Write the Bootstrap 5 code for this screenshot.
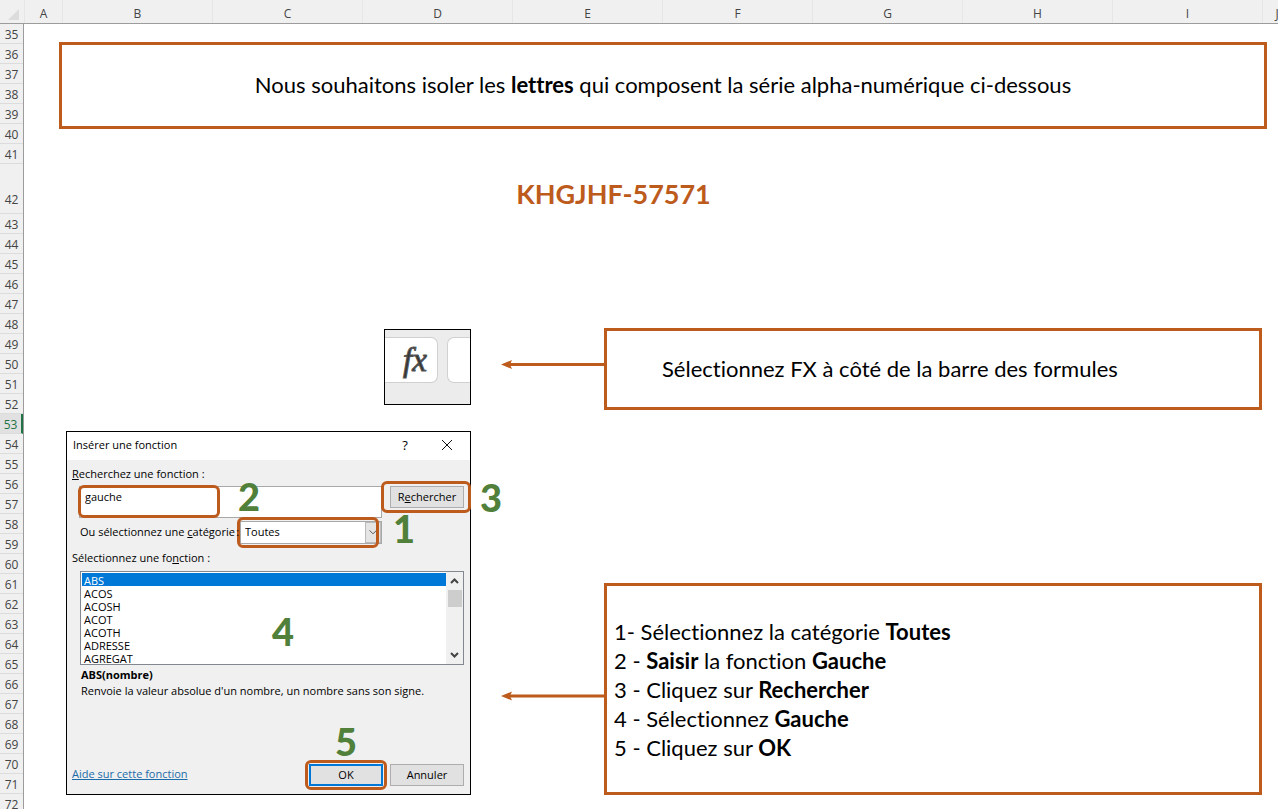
<!DOCTYPE html>
<html lang="fr">
<head>
<meta charset="utf-8">
<meta name="viewport" content="width=device-width, initial-scale=1">
<title>Fonction GAUCHE</title>
<link href="https://cdn.jsdelivr.net/npm/bootstrap@5.3.0/dist/css/bootstrap.min.css" rel="stylesheet">
<style>
  :root { --rust: #bd5b1d; --leaf: #51803a; --chrome: #f0f0f0; }
  body { font-family: "Open Sans", "Noto Sans", sans-serif; color: #000; background: #fff; font-variant-ligatures: none; }

  /* Spreadsheet frame */
  .sheet { height: 100vh; }
  .col-heads { display: grid; grid-template-columns: 24px 38px repeat(8, minmax(0, 1fr)) 16px; height: 24px;
    background: var(--chrome); border-bottom: 1px solid #9c9c9c; font-size: 12px; line-height: 28px; color: #444; text-align: center; }
  .col-heads > span { height: 23px; }
  .col-heads > span + span { border-left: 1px solid #e6e6e6; }
  .col-heads .cut { width: 28px; }
  .corner { fill: #dcdcdc; display: block; }
  .row-heads { width: 24px; flex: none; background: var(--chrome); border-right: 1px solid #9c9c9c;
    font-size: 12px; line-height: 22px; color: #444; text-align: center; }
  .row-heads li { height: 20px; border-bottom: 1px solid #dcdcdc; }
  .row-heads .tall { height: 50px; padding-top: 25px; }
  .row-heads .current { background: #e1e1e1; color: #217346; border-right: 2px solid #217346; }

  /* Notes */
  .cells { font-family: Lato, "Noto Sans", sans-serif; font-size: 22px; }
  .note { border: 3px solid var(--rust); background: #fff; }
  .banner { margin: 18px 11px 0 35px; height: 87px; padding-bottom: 2px; }
  .code { margin: 41px 110px 0 35px; font-size: 27px; line-height: 48px; font-weight: 700; color: var(--rust); text-align: center; }
  .step { padding: 0 16px 0 42px; gap: 30px; }
  .step-fx { margin-top: 110px; }
  .step-dialog { margin-top: 21px; }
  .shot { width: 405px; flex: none; }
  .arrow { width: 103px; flex: none; }
  .arrow svg { display: block; width: 103px; height: 12px; }
  .note-fx { height: 82px; padding: 0 0 2px 55px; }
  .note-steps { height: 212px; padding: 0 7px; line-height: 29px; }

  /* Formula bar extract */
  .fx-bar { width: 87px; height: 76px; border: 1px solid #000; background: #ececec; padding-top: 7px; gap: 9px; }
  .fx-bar button, .fx-bar span { height: 46px; border: 1px solid #d0d0d0; background: #fff; }
  .fx-bar button { width: 53px; border-left: 0; border-radius: 0 7px 7px 0; padding: 0 0 0 8px;
    font: italic 33px/38px "Liberation Serif", serif; color: #333; -webkit-text-stroke: 1px #555; }
  .fx-bar span { flex: 1; border-right: 0; border-radius: 7px 0 0 7px; }

  /* Insert function dialog */
  .dlg { height: 364px; border: 1px solid #000; background: var(--chrome); font: 11px/16px "Open Sans", "Noto Sans", sans-serif; }
  .dlg-title { height: 28px; background: #fff; padding: 0 16px 2px 6px; }
  .dlg-title button { border: 0; background: none; padding: 0; width: 14px; line-height: 16px; font-size: 13px; }
  .dlg-title svg { display: block; }
  .dlg-body { padding: 6px 6px 8px 5px; height: 334px; }
  .dlg input, .dlg select { font: inherit; color: #000; border: 1px solid #a8a8a8; border-radius: 0; background: #fff; }
  .dlg-search { margin: 4px 0 0 7px; }
  .search-box { width: 303px; }
  .search-box input { display: block; width: 303px; height: 32px; padding: 0 5px 12px; }
  .dlg-btn { width: 74px; height: 22px; border: 1px solid #adadad; background: #e1e1e1; padding: 0 0 1px; font: inherit; line-height: 18px; }
  .dlg-btn.primary { border: 2px solid #0078d7; }
  .cat-row { margin: 3px 0 0 8px; height: 23px; }
  .cat-row label { width: 160px; flex: none; white-space: nowrap; padding-bottom: 2px; position: relative; z-index: 1; }
  .cat-box { width: 142px; }
  .cat-box select { display: block; width: 142px; height: 23px; padding: 0 4px 2px; appearance: none; }
  .cat-box .chev { position: absolute; right: 1px; top: 1px; width: 16px; height: 21px; background: #e5e5e5; border: 1px solid #bbb; }
  .fn-label { margin-top: 6px; }
  .fn-list { margin: 5px 0 0 8px; width: 384px; height: 94px; border: 1px solid #828790; background: #fff; }
  .fn-list select { flex: 1; height: 92px; border: 0; padding: 1px 0 0 1px; overflow: hidden; outline: 0; }
  .fn-list option { padding: 0 2px; height: 13px; min-height: 0; line-height: 12px; font-size: 11px; }
  .fn-list option:checked { background: #0078d7 linear-gradient(#0078d7, #0078d7); color: #fff; -webkit-text-fill-color: #fff; }
  .bar { width: 17px; background: var(--chrome); }
  .bar i { height: 17px; width: 14px; margin: 0 auto; background: #cdcdcd; }
  .fn-help { margin: 2px 0 0 9px; }
  .dlg a { color: #1b6ca8; }
  .help-link { padding-bottom: 3px; }
  .ok-wrap { margin-right: 7px; }

  /* Callouts laid over the dialog */
  .ring { position: absolute; border: 3px solid var(--rust); border-radius: 6px; pointer-events: none; }
  .ring-2 { left: -1px; top: -1px; width: 142px; height: 33px; }
  .ring-3 { inset: -5px -7px -5px -9px; }
  .ring-1 { inset: -4px 3px -4px -3px; }
  .ring-5 { inset: -4px; }
  .num { position: absolute; font: 900 38px/38px Lato, "Noto Sans", sans-serif; color: var(--leaf); pointer-events: none; }
  .num-1 { left: 153px; top: -12px; }
  .num-2 { left: 159px; top: -9px; }
  .num-3 { left: 90px; top: -8px; }
  .num-4 { left: 191px; top: 40px; }
  .num-5 { left: 26px; top: -42px; }
</style>
</head>
<body>
<div class="sheet overflow-hidden d-flex flex-column">
  <div class="col-heads flex-shrink-0">
    <span><svg class="corner" width="22" height="22"><path d="M19 9v11H8z"/></svg></span>
    <span>A</span><span>B</span><span>C</span><span>D</span><span>E</span><span>F</span><span>G</span><span>H</span><span>I</span>
    <span class="overflow-hidden"><span class="cut d-block">J</span></span>
  </div>
  <div class="d-flex flex-grow-1">
    <ol class="row-heads list-unstyled mb-0">
      <li>35</li><li>36</li><li>37</li><li>38</li><li>39</li><li>40</li><li>41</li><li class="tall">42</li><li>43</li><li>44</li>
      <li>45</li><li>46</li><li>47</li><li>48</li><li>49</li><li>50</li><li>51</li><li>52</li><li class="current">53</li><li>54</li>
      <li>55</li><li>56</li><li>57</li><li>58</li><li>59</li><li>60</li><li>61</li><li>62</li><li>63</li><li>64</li>
      <li>65</li><li>66</li><li>67</li><li>68</li><li>69</li><li>70</li><li>71</li><li>72</li>
    </ol>

    <main class="cells flex-grow-1">
      <div class="note banner d-flex align-items-center justify-content-center">
        <div>Nous souhaitons isoler les <b>lettres</b> qui composent la série alpha-numérique ci-dessous</div>
      </div>
      <div class="code">KHGJHF-57571</div>

      <section class="step step-fx d-flex align-items-center">
        <div class="shot d-flex justify-content-end pb-1">
          <div class="fx-bar d-flex align-items-start"><button type="button" aria-label="Insérer une fonction">fx</button><span></span></div>
        </div>
        <div class="d-flex flex-grow-1 align-items-center">
          <div class="arrow pb-2"><svg viewBox="0 0 103 12"><path d="M7 5.500H103" stroke="#bd5b1d" stroke-width="3"/><path d="M0 5.500L11 1L9 5.500L11 10z" fill="#bd5b1d"/></svg></div>
          <div class="note note-fx flex-grow-1 d-flex align-items-center">Sélectionnez FX à côté de la barre des formules</div>
        </div>
      </section>

      <section class="step step-dialog d-flex align-items-end">
        <div class="shot dlg">
          <div class="dlg-title d-flex align-items-center">
            <span class="me-auto">Insérer une fonction</span>
            <button type="button" class="me-4">?</button>
            <button type="button" class="ms-1" aria-label="Fermer"><svg width="14" height="12" viewBox="0 0 14 12"><path d="M2 1l10 10M12 1L2 11" stroke="#111" fill="none"/></svg></button>
          </div>
          <div class="dlg-body d-flex flex-column">
            <label for="q"><u>R</u>echerchez une fonction :</label>
            <div class="dlg-search d-flex align-items-start justify-content-between">
              <div class="search-box position-relative">
                <input id="q" type="text" value="gauche">
                <span class="ring ring-2"></span><span class="num num-2">2</span>
              </div>
              <div class="position-relative">
                <button type="button" class="dlg-btn d-block">R<u>e</u>chercher</button>
                <span class="ring ring-3"></span><span class="num num-3">3</span>
              </div>
            </div>
            <div class="cat-row d-flex align-items-center">
              <label for="cat">Ou sélectionnez une <u>c</u>atégorie&#8239;:</label>
              <div class="cat-box position-relative">
                <select id="cat"><option>Toutes</option></select>
                <svg class="chev" viewBox="0 0 16 21"><path d="M4 8l4 4 4-4" stroke="#444" fill="none"/></svg>
                <span class="ring ring-1"></span><span class="num num-1">1</span>
              </div>
            </div>
            <label class="fn-label" for="fn">Sélectionnez une fo<u>n</u>ction :</label>
            <div class="fn-list d-flex position-relative">
              <select id="fn" size="7">
                <option selected>ABS</option><option>ACOS</option><option>ACOSH</option><option>ACOT</option><option>ACOTH</option><option>ADRESSE</option><option>AGREGAT</option>
              </select>
              <div class="bar d-flex flex-column">
                <svg width="17" height="18" viewBox="0 0 17 18"><path d="M5 11l3.500-3.500L12 11" stroke="#444" stroke-width="2" fill="none"/></svg>
                <i></i>
                <svg class="mt-auto" width="17" height="18" viewBox="0 0 17 18"><path d="M5 7l3.500 3.500L12 7" stroke="#444" stroke-width="2" fill="none"/></svg>
              </div>
              <span class="num num-4">4</span>
            </div>
            <div class="fn-help"><b>ABS(nombre)</b><div>Renvoie la valeur absolue d'un nombre, un nombre sans son signe.</div></div>
            <div class="d-flex align-items-center mt-auto">
              <a href="#" class="help-link me-auto">Aide sur cette fonction</a>
              <div class="ok-wrap position-relative">
                <button type="button" class="dlg-btn primary d-block">OK</button>
                <span class="ring ring-5"></span><span class="num num-5">5</span>
              </div>
              <button type="button" class="dlg-btn">Annuler</button>
            </div>
          </div>
        </div>
        <div class="d-flex flex-grow-1 align-items-center">
          <div class="arrow pt-3"><svg viewBox="0 0 103 12"><path d="M7 5H103" stroke="#bd5b1d" stroke-width="3"/><path d="M0 5L11 .5L9 5L11 9.500z" fill="#bd5b1d"/></svg></div>
          <div class="note note-steps flex-grow-1 d-flex flex-column justify-content-center">
            <div>1- Sélectionnez la catégorie <b>Toutes</b></div>
            <div>2 - <b>Saisir</b> la fonction <b>Gauche</b></div>
            <div>3 - Cliquez sur <b>Rechercher</b></div>
            <div>4 - Sélectionnez <b>Gauche</b></div>
            <div>5 - Cliquez sur <b>OK</b></div>
          </div>
        </div>
      </section>
    </main>
  </div>
</div>
<script src="https://cdn.jsdelivr.net/npm/bootstrap@5.3.0/dist/js/bootstrap.bundle.min.js"></script>
</body>
</html>
